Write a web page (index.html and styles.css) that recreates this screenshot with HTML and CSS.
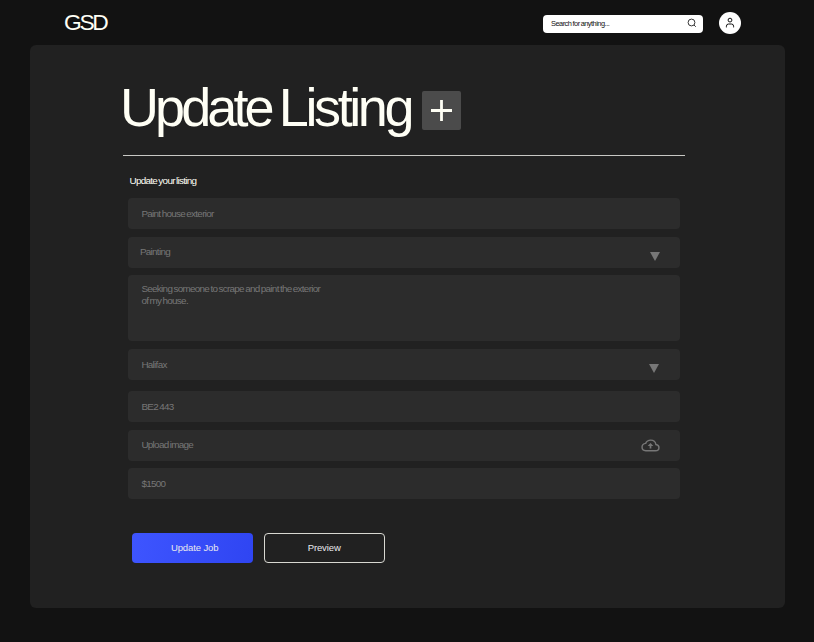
FILE: index.html
```html
<!DOCTYPE html>
<html lang="en">
<head>
<meta charset="utf-8">
<title>GSD – Update Listing</title>
<link rel="stylesheet" href="styles.css">
</head>
<body>
<header class="topbar">
  <div class="logo">GSD</div>
  <div class="search">
    <span>Search for anything...</span>
    <svg class="search-icon" viewBox="0 0 10 10"><circle cx="4.5" cy="4.5" r="3.4"/><path d="M7 7l1.8 1.8"/></svg>
  </div>
  <div class="avatar">
    <svg viewBox="0 0 10 12"><circle cx="5" cy="3.1" r="1.9"/><path d="M1.4 10.4V9.2Q1.4 7 3.6 7H6.4Q8.6 7 8.6 9.2V10.4"/></svg>
  </div>
</header>
<main class="panel">
  <div class="heading">
    <h1>Update <span class="wide">Listing</span></h1>
    <div class="add"><svg viewBox="0 0 39 39"><path d="M9 19.5H30M19.5 9V30"/></svg></div>
  </div>
  <form class="form">
    <p class="label">Update your listing</p>
    <div class="field"><span>Paint house exterior</span></div>
    <div class="field category"><span>Painting</span><svg class="arrow" viewBox="0 0 10 9"><path d="M0 0H10L5 9Z"/></svg></div>
    <div class="field description"><span>Seeking someone to scrape and paint the exterior<br>of my house.</span></div>
    <div class="field city"><span>Halifax</span><svg class="arrow" viewBox="0 0 10 9"><path d="M0 0H10L5 9Z"/></svg></div>
    <div class="field"><span>BE2 443</span></div>
    <div class="field"><span>Upload image</span>
      <svg class="cloud" viewBox="0 0 20 14"><path d="M5 12.2H15.2C17.4 12.2 18.9 10.9 18.9 9C18.9 7.2 17.6 5.9 15.7 5.7C15.2 2.8 13 1.1 10.2 1.1C7.6 1.1 5.8 2.4 4.9 4.5C2.6 4.8 1.1 6.3 1.1 8.4C1.1 10.7 2.7 12.2 5 12.2Z"/><path class="up" d="M10 4L13 7.2H10.9V10H9.1V7.2H7Z"/></svg>
    </div>
    <div class="field"><span>$1500</span></div>
    <div class="actions">
      <button class="primary" type="button">Update Job</button>
      <button class="secondary" type="button">Preview</button>
    </div>
  </form>
</main>
</body>
</html>
```
FILE: styles.css
```css
* { box-sizing: border-box; }
body {
  margin: 0;
  height: 642px;
  overflow: hidden;
  background: #121212;
  color: #fffff5;
  font-family: "Liberation Sans", Arial, sans-serif;
}
svg { display: block; fill: none; }
.topbar {
  display: flex;
  align-items: center;
  height: 45px;
  padding: 0 73px 0 64px;
}
.logo {
  flex: 1;
  font-size: 22.8px;
  letter-spacing: -2.3px;
  line-height: 24px;
  margin-top: -1px;
}
.search {
  display: flex;
  align-items: center;
  justify-content: space-between;
  width: 160px;
  height: 18px;
  margin: 2px 16px 0 0;
  padding: 0 6px 0 8px;
  border-radius: 4px;
  background: #fff;
  color: #111;
  font-size: 7.4px;
  letter-spacing: -.5px;
  word-spacing: -.5px;
}
.search-icon { width: 10px; height: 10px; margin-top: -1px; stroke: #222; stroke-width: .9; }
.avatar {
  display: flex;
  align-items: center;
  justify-content: center;
  width: 22px;
  height: 22px;
  border-radius: 50%;
  background: #fff;
}
.avatar svg { width: 10px; height: 12px; stroke: #111; stroke-width: 1; }
.panel {
  width: 755px;
  height: 563px;
  margin-left: 30px;
  padding: 46px 99px 0 93px;
  border-radius: 6px;
  background: #212121;
}
.heading {
  display: flex;
  width: 562px;
  height: 65px;
  border-bottom: 1px solid #c8c8c4;
}
h1 {
  width: 297px;
  margin: -15px 0 0 -3px;
  font-size: 54px;
  font-weight: 400;
  line-height: 62px;
  letter-spacing: -3.9px;
  word-spacing: -3px;
  white-space: nowrap;
}
.wide { letter-spacing: -3.4px; }
.add { width: 39px; height: 39px; margin-left: 5px; border-radius: 2px; background: #4b4b4b; }
.add path { stroke: #fffff5; stroke-width: 2.8; }
.form { padding-left: 5.4px; width: 557.4px; }
.label {
  margin: 17.6px 0 11.8px 1.1px;
  font-size: 9.9px;
  line-height: 13px;
  letter-spacing: -.7px;
  word-spacing: -.8px;
}
.field {
  display: flex;
  align-items: center;
  justify-content: space-between;
  width: 552px;
  height: 31px;
  margin-bottom: 7.4px;
  padding: 0 20px 0 13px;
  border-radius: 4px;
  background: #2c2c2c;
  color: #777;
  font-size: 9.9px;
  line-height: 12px;
  letter-spacing: -.7px;
  word-spacing: -.8px;
}
.category { padding-left: 11.5px; }
.description { height: 66px; align-items: flex-start; padding-top: 8px; margin-bottom: 8px; }
.city { margin-bottom: 11.3px; padding-right: 21px; }
.arrow { width: 10px; height: 9px; margin-top: 8px; fill: #777; }
.cloud { width: 19px; height: 13.5px; stroke: #777; stroke-width: 1.5; }
.cloud .up { fill: #777; stroke: none; }
.actions { display: flex; gap: 11px; margin: 34px 0 0 3.3px; }
button {
  width: 121px;
  height: 29.5px;
  padding: 0 0 1px;
  border: 0;
  border-radius: 4px;
  font: 9.5px "Liberation Sans", Arial, sans-serif;
  letter-spacing: -.1px;
  color: #e8e8ee;
}
.primary { background: linear-gradient(100deg, #3e55ff, #2f45f2); padding-left: 5px; }
.secondary { border: 1px solid #d8d8d2; background: transparent; }
```
